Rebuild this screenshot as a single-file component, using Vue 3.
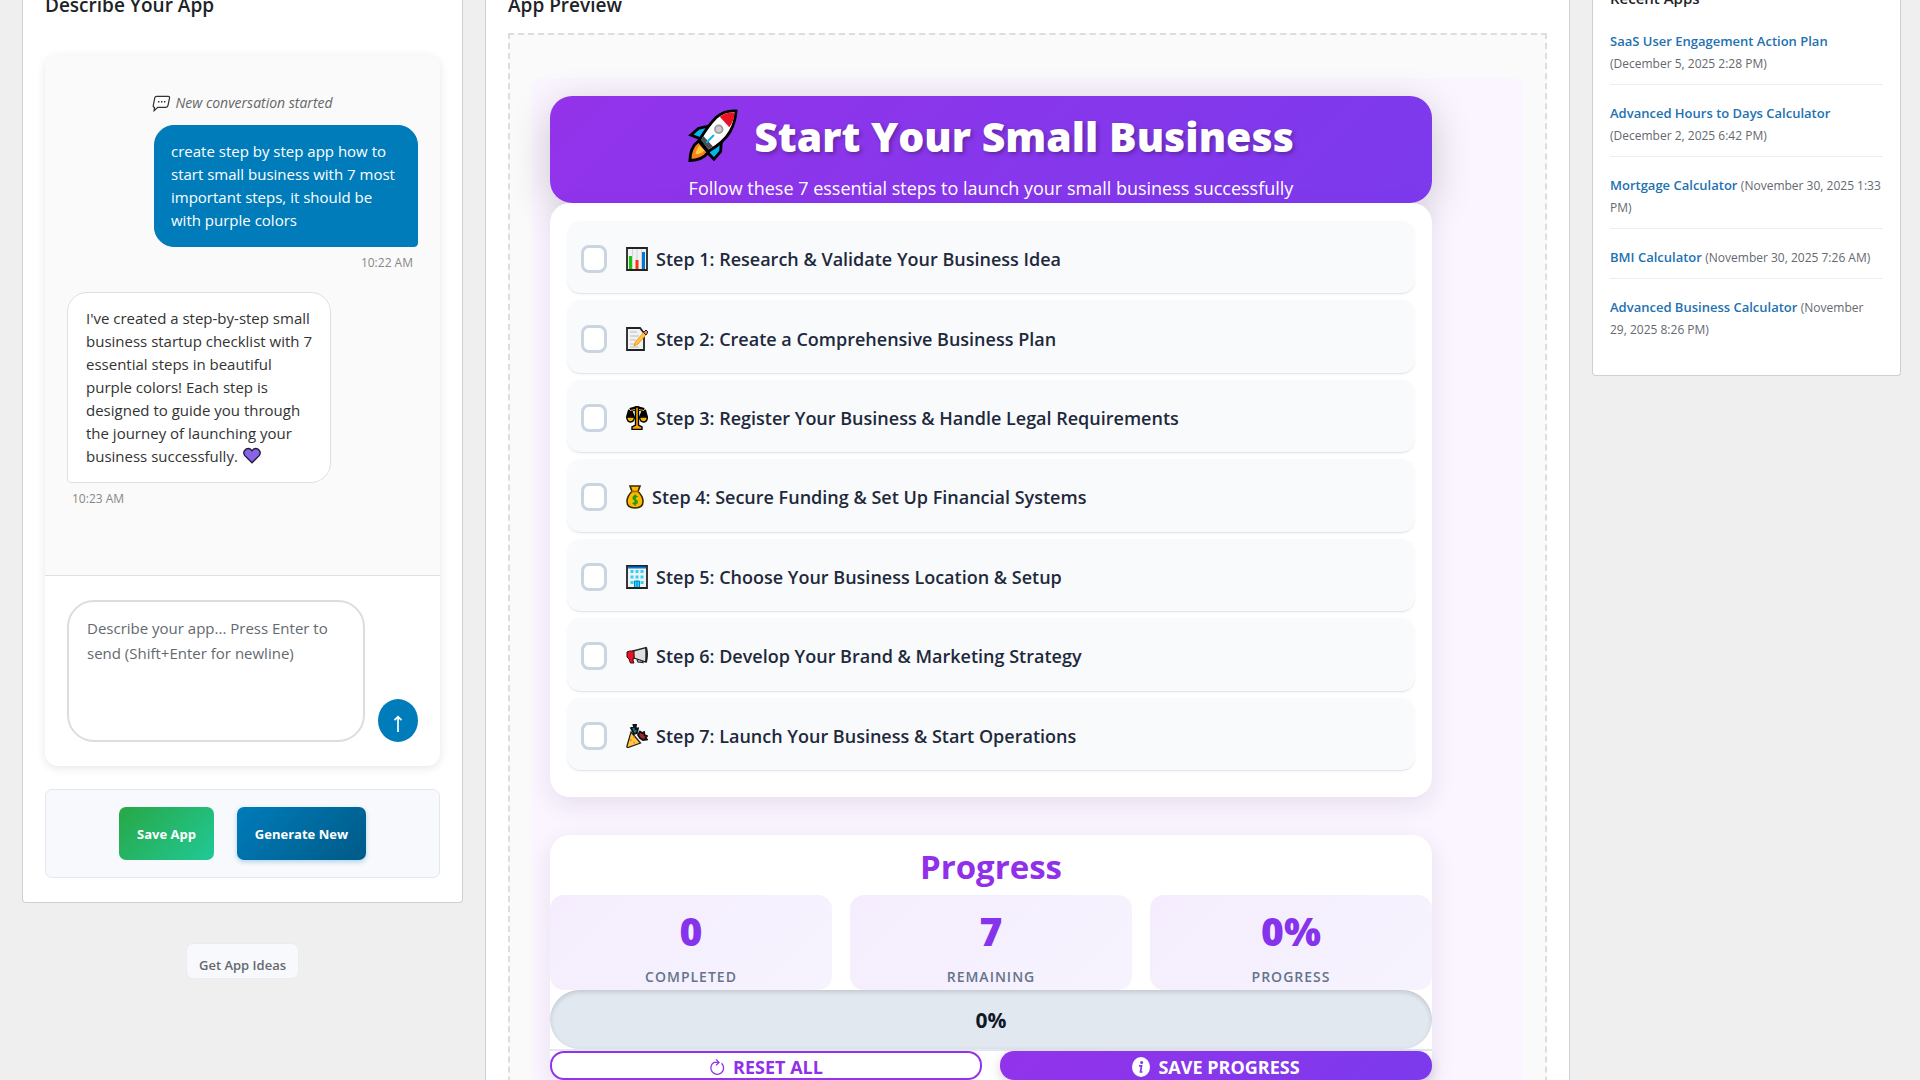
<template>
  <div class="page">
    <div class="column-left">
      <section class="panel builder">
        <h2>Describe Your App</h2>
        <div class="chat">
          <div class="messages">
            <p class="system-message">
              <svg class="bubble-icon" viewBox="0 0 20 18">
                <path
                  d="M5 1.5H17.2Q18.8 1.5 18.5 3L16.9 11Q16.5 13 14.6 13H6L2.2 16.6 2.6 13Q.9 13 1.3 11.2L2.8 3.4Q3.2 1.5 5 1.5Z"
                  fill="#fff"
                  stroke="#333"
                  stroke-width="1.3"
                />
                <path d="M6.2 7.2h1.6M9.4 7.2H11M12.6 7.2h1.6" stroke="#333" stroke-width="1.6" />
              </svg>
              New conversation started
            </p>
            <div v-for="m in messages" :key="m.time" class="message" :class="m.from">
              <div class="bubble">
                <span>{{ m.text }}</span>
                <svg v-if="m.from === 'bot'" class="heart-icon" viewBox="0 0 20 18">
                  <path
                    d="M10 17 2 9.2Q0 6.4 1.5 3.8 3.2 1 6 1.2 8.6 1.4 10 3.7 11.4 1.4 14 1.2 16.8 1 18.5 3.8 20 6.4 18 9.2Z"
                    fill="#8764e8"
                    stroke="#1d1a33"
                    stroke-width="1.5"
                  />
                </svg>
              </div>
              <time>{{ m.time }}</time>
            </div>
          </div>
          <form class="composer" @submit.prevent="sendMessage">
            <textarea
              v-model="draft"
              aria-label="Describe your app"
              placeholder="Describe your app... Press Enter to send (Shift+Enter for newline)"
              @keydown.enter.exact.prevent="sendMessage"
            ></textarea>
            <button type="submit" class="send" aria-label="Send">
              <svg viewBox="0 0 10 18">
                <path d="M5 17V2M1.5 5.2 5 1.8 8.5 5.2" fill="none" stroke="#fff" stroke-width="1.7" />
              </svg>
            </button>
          </form>
        </div>
        <div class="builder-actions">
          <button type="button" class="btn btn-save">Save App</button>
          <button type="button" class="btn btn-generate">Generate New</button>
        </div>
      </section>
      <button type="button" class="ideas">Get App Ideas</button>
    </div>

    <section class="panel preview">
      <h2>App Preview</h2>
      <div class="preview-frame">
        <div class="generated-app">
          <div class="app-body">
            <header class="hero">
              <h1>
                <svg class="rocket" viewBox="0 0 52 56">
                  <path d="M11 20 20 18 30 18 16 32 3 27Z" fill="#00b7f1" stroke="#000" stroke-width="3" />
                  <path d="M35 25 34 44 27 52 20 45 22 36Z" fill="#00b7f1" stroke="#000" stroke-width="3" />
                  <path d="M11 33Q2 40 2 53.5 15 53 21 45Z" fill="#f7801e" stroke="#000" stroke-width="3" />
                  <path d="M12 38Q8 43 8 47 13 47 17 43Z" fill="#ffc83d" />
                  <path
                    d="M50 2Q38 1 29 9 21 17 12 32L21 44Q38 34 44 23 49 14 50 2Z"
                    fill="#fff"
                    stroke="#000"
                    stroke-width="3"
                  />
                  <path d="M48.5 3.5Q39 3 33 8L43 19Q48 12 48.5 3.5Z" fill="#e81224" />
                  <path d="M13.5 32 21 42 26 39 16 28Z" fill="#484f55" />
                  <path d="M19 35 27 27" stroke="#00b7f1" stroke-width="2" />
                  <circle cx="32" cy="21" r="4" fill="#ccc" stroke="#999" stroke-width="1.8" />
                </svg>
                Start Your Small Business
              </h1>
              <p>Follow these 7 essential steps to launch your small business successfully</p>
            </header>

            <div class="steps">
              <label v-for="(step, i) in steps" :key="step.title" class="step">
                <input v-model="step.done" type="checkbox" />
                <svg v-if="i === 0" class="emoji" viewBox="0 0 22 24">
                  <path d="M1 1H21V23H1Z" fill="#f2f2f2" stroke="#222" stroke-width="1.8" />
                  <path d="M6.5 2V22M11 2V22M15.5 2V22" stroke="#d4d4d4" />
                  <path d="M4.5 9V22" stroke="#16c60c" stroke-width="3" />
                  <path d="M11 13V22" stroke="#f03a17" stroke-width="3" />
                  <path d="M17.5 5V22" stroke="#0078d7" stroke-width="3" />
                </svg>
                <svg v-else-if="i === 1" class="emoji" viewBox="0 0 22 24">
                  <path d="M1 1H14L18 6V23H1Z" fill="#f2f2f2" stroke="#222" stroke-width="1.8" />
                  <path d="M4 5h7M4 9h9M4 13h6M4 17h5M4 20h9" stroke="#bbb" stroke-width="1.2" />
                  <path d="M8 19 9.5 15 18 5 20.5 7 12 17Z" fill="#ffc83d" stroke="#f7941e" />
                  <path d="M17.5 5.5 20 3 22 5 20 8Z" fill="#ff7b6b" stroke="#222" />
                </svg>
                <svg v-else-if="i === 2" class="emoji" viewBox="0 0 22 24">
                  <path d="M4 4 11 2 18 4" fill="none" stroke="#000" stroke-width="4" />
                  <path d="M4 4 2 11M4 4 7 11M18 4 15 11M18 4 20 11" stroke="#000" stroke-width="4" />
                  <path
                    d="M.7 11H8.5Q8 16 4.5 16 1 16 .7 11ZM13.5 11H21.5Q21 16 17.5 16 14 16 13.5 11Z"
                    fill="#f7b500"
                    stroke="#000"
                    stroke-width="1.4"
                  />
                  <path
                    d="M9.5 1H12.5V19L16 21V23.4H6V21L9.5 19Z"
                    fill="#f7a500"
                    stroke="#000"
                    stroke-width="1.4"
                  />
                  <path d="M4 4.5 9 3.5M13 3.5 18 4.5" stroke="#f7b500" />
                </svg>
                <svg v-else-if="i === 3" class="emoji bag" viewBox="0 0 18 24">
                  <path
                    d="M4 1H14L12 6.5Q17 11 17 16.5 17 23 9 23 1 23 1 16.5 1 11 6 6.5Z"
                    fill="#ffb900"
                    stroke="#3b2a00"
                    stroke-width="1.6"
                  />
                  <path d="M5.5 6.5H12.5" stroke="#b36b00" stroke-width="1.8" />
                  <path
                    d="M11.5 12Q9 10.2 7.5 12 6.5 14 9 14.8 12 15.8 11 17.8 9.3 19.6 6.7 18M9.1 9.5V20.8"
                    fill="none"
                    stroke="#149b12"
                    stroke-width="1.5"
                  />
                </svg>
                <svg v-else-if="i === 4" class="emoji" viewBox="0 0 22 24">
                  <path d="M1 1H21V23H1Z" fill="#f2f2f2" stroke="#222" stroke-width="1.8" />
                  <path d="M2 2.5H20" stroke="#0078d7" stroke-width="2" />
                  <path
                    d="M4.5 6.5h3M9.5 6.5h3M14.5 6.5h3M4.5 12h3M9.5 12h3M14.5 12h3M4.5 17.5h3M14.5 17.5h3"
                    stroke="#31d2f7"
                    stroke-width="3"
                  />
                  <path d="M8.5 22V16H13.5V22M11 16V22" fill="#31d2f7" stroke="#0086cf" />
                </svg>
                <svg v-else-if="i === 5" class="emoji" viewBox="0 0 22 24">
                  <path d="M7 7 20 3.5V18L8 14Z" fill="#dedede" stroke="#222" stroke-width="1.3" />
                  <path d="M1 8Q3 6.5 8 7V15H6.5L8 19H4.5L3 15 1 13Z" fill="#e81224" stroke="#3c0508" />
                  <path d="M11 15.5 12 18 17 18.5V17" fill="none" stroke="#222" stroke-width="1.3" />
                  <path d="M20 3.5Q22 10 20 18" fill="none" stroke="#222" stroke-width="2" />
                </svg>
                <svg v-else class="emoji" viewBox="0 0 22 24">
                  <path d="M5 8 14.5 19 2 23.5Q.6 23.5 1 22Z" fill="#ffc83d" stroke="#222" stroke-width="1.3" />
                  <path d="M5 15 4.5 17M8.5 18 8 19.5M7.5 12.5 8.5 14" stroke="#f7801e" stroke-width="1.5" />
                  <path
                    d="M5 4 8 3 7.5 1 10 1 9.5 5 12 4.5 11 9 8 10Z"
                    fill="#107c8c"
                    stroke="#111"
                    stroke-width="1.8"
                  />
                  <path
                    d="M12 11 14 7.5 16 9 18 8 18.5 11 21 12 19.5 14 21 15.5 17 16 14 14Z"
                    fill="#a4262c"
                    stroke="#111"
                    stroke-width="1.8"
                  />
                </svg>
                <span>{{ step.title }}</span>
              </label>
            </div>

            <section class="progress-card">
              <h2>Progress</h2>
              <div class="stats">
                <div v-for="s in stats" :key="s.label" class="stat">
                  <strong>{{ s.value }}</strong>
                  <span>{{ s.label }}</span>
                </div>
              </div>
              <div class="progress-bar">
                <div class="progress-fill" :style="{ width: percent + '%' }"></div>
                <span>{{ percent }}%</span>
              </div>
              <div class="progress-actions">
                <button type="button" class="action reset" @click="resetAll">
                  <svg viewBox="0 0 16 18">
                    <path
                      d="M12.5 5.2A6.4 6.4 0 1 1 5 4.4H9.5M7 1.4 10 4.4 7 7.4"
                      fill="none"
                      stroke="currentColor"
                      stroke-width="1.3"
                    />
                  </svg>
                  RESET ALL
                </button>
                <button type="button" class="action save">
                  <svg class="info" viewBox="0 0 18 20">
                    <ellipse cx="9" cy="10" rx="9" ry="10" fill="#fff" />
                    <circle cx="9.6" cy="5.5" r="1.5" fill="#8236eb" />
                    <path d="M7 8.8H9.5L8.5 15H10.5" fill="none" stroke="#8236eb" stroke-width="1.7" />
                  </svg>
                  SAVE PROGRESS
                </button>
              </div>
            </section>
          </div>
        </div>
      </div>
    </section>

    <aside class="panel recent">
      <h3>Recent Apps</h3>
      <ul>
        <li v-for="app in recentApps" :key="app.name">
          <a href="#">{{ app.name }}</a>{{ " " }}<small>({{ app.date }})</small>
        </li>
      </ul>
    </aside>
  </div>
</template>

<script setup>
import { ref, computed } from "vue";

const draft = ref("");

const messages = ref([
  {
    from: "user",
    text: "create step by step app how to\nstart small business with 7 most\nimportant steps, it should be\nwith purple colors",
    time: "10:22 AM",
  },
  {
    from: "bot",
    text: "I've created a step-by-step small\nbusiness startup checklist with 7\nessential steps in beautiful\npurple colors! Each step is\ndesigned to guide you through\nthe journey of launching your\nbusiness successfully.",
    time: "10:23 AM",
  },
]);

const steps = ref([
  { title: "Step 1: Research & Validate Your Business Idea", done: false },
  { title: "Step 2: Create a Comprehensive Business Plan", done: false },
  { title: "Step 3: Register Your Business & Handle Legal Requirements", done: false },
  { title: "Step 4: Secure Funding & Set Up Financial Systems", done: false },
  { title: "Step 5: Choose Your Business Location & Setup", done: false },
  { title: "Step 6: Develop Your Brand & Marketing Strategy", done: false },
  { title: "Step 7: Launch Your Business & Start Operations", done: false },
]);

const recentApps = [
  { name: "SaaS User Engagement Action Plan", date: "December 5, 2025 2:28 PM" },
  { name: "Advanced Hours to Days Calculator", date: "December 2, 2025 6:42 PM" },
  { name: "Mortgage Calculator", date: "November 30, 2025 1:33 PM" },
  { name: "BMI Calculator", date: "November 30, 2025 7:26 AM" },
  { name: "Advanced Business Calculator", date: "November 29, 2025 8:26 PM" },
];

const completed = computed(() => steps.value.filter((s) => s.done).length);
const percent = computed(() => Math.round((completed.value / steps.value.length) * 100));
const stats = computed(() => [
  { label: "COMPLETED", value: completed.value },
  { label: "REMAINING", value: steps.value.length - completed.value },
  { label: "PROGRESS", value: percent.value + "%" },
]);

const sendMessage = () => {
  if (!draft.value.trim()) return;
  const time = new Date().toLocaleTimeString("en-US", { hour: "2-digit", minute: "2-digit" });
  messages.value.push({ from: "user", text: draft.value, time });
  draft.value = "";
};

const resetAll = () => {
  steps.value.forEach((s) => (s.done = false));
};
</script>

<style>
body {
  margin: 0;
  background: #efefef;
}
</style>

<style scoped>
* {
  box-sizing: border-box;
}

.page {
  display: flex;
  gap: 22px;
  height: 100vh;
  padding: 0 19px 0 22px;
  overflow: hidden;
  font-family: "Segoe UI", "Open Sans", "Noto Sans", sans-serif;
  color: #1d2327;
}

h1,
h2,
h3,
p,
ul {
  margin: 0;
  padding: 0;
}

button {
  font-family: inherit;
  cursor: pointer;
}

.panel {
  background: #fff;
  border: 1px solid #ccd0d4;
  border-top: none;
  padding: 0 22px;
}

.builder h2,
.preview > h2 {
  font-size: 19px;
  font-weight: 600;
  line-height: 11px;
}

.column-left {
  flex: 0 0 441px;
  display: flex;
  flex-direction: column;
  align-items: center;
}

.builder {
  width: 100%;
  padding-bottom: 24px;
  border-radius: 0 0 4px 4px;
}

.chat {
  margin-top: 44px;
  border-radius: 13px;
  box-shadow: 0 2px 10px rgba(0, 0, 0, 0.1);
  overflow: hidden;
}

.messages {
  min-height: 521px;
  padding: 37px 22px 22px;
  background: #fafafa;
  border-bottom: 1px solid #e0e0e0;
}

.system-message {
  display: flex;
  align-items: center;
  justify-content: center;
  gap: 4px;
  margin-bottom: 11px;
  font-size: 14px;
  font-style: italic;
  line-height: 22px;
  color: #666;
}

.bubble-icon {
  width: 19px;
  height: 17px;
}

.message {
  display: flex;
  flex-direction: column;
  align-items: flex-start;
  margin-bottom: 18px;
}

.message.user {
  align-items: flex-end;
}

.bubble {
  width: 264px;
  padding: 14px 18px;
  border: 1px solid #e0e0e0;
  border-radius: 20px 20px 20px 4px;
  background: #fff;
  color: #333;
  font-size: 15px;
  line-height: 23px;
  white-space: pre;
}

.user .bubble {
  padding: 14px 16px;
  border-color: #007cba;
  border-radius: 20px 20px 4px 20px;
  background: #007cba;
  color: #fff;
}

.heart-icon {
  width: 18px;
  height: 17px;
  margin-left: 5px;
  vertical-align: -2px;
}

time {
  padding: 5px 5px 0;
  font-size: 12px;
  line-height: 22px;
  color: #888;
}

.composer {
  display: flex;
  align-items: flex-end;
  gap: 13px;
  padding: 24px 22px;
}

textarea {
  flex: 1;
  min-width: 0;
  height: 142px;
  padding: 14px 18px;
  border: 2px solid #ddd;
  border-radius: 27px;
  background: #fff;
  font-family: inherit;
  font-size: 15px;
  line-height: 25px;
  resize: none;
}

textarea::placeholder {
  color: #646970;
}

.send {
  display: flex;
  align-items: center;
  justify-content: center;
  width: 40px;
  height: 43px;
  padding: 6px 0 0;
  border: none;
  border-radius: 50%;
  background: #007cba;
}

.send svg {
  width: 10px;
  height: 18px;
}

.builder-actions {
  display: flex;
  justify-content: center;
  gap: 23px;
  margin-top: 23px;
  padding: 17px;
  background: #f8f9fc;
  border: 1px solid #e2e8f0;
  border-radius: 7px;
}

.btn {
  height: 53px;
  padding: 0 18px;
  border: none;
  border-radius: 7px;
  color: #fff;
  font-size: 13px;
  font-weight: 700;
  white-space: nowrap;
}

.btn-save {
  background: linear-gradient(135deg, #28a745, #20c997);
}

.btn-generate {
  background: linear-gradient(135deg, #007cba, #005a87);
  box-shadow: 0 2px 5px rgba(0, 124, 186, 0.3);
}

.ideas {
  margin-top: 40px;
  height: 36px;
  padding: 8px 12px 0;
  border: 1px solid #e9ecf1;
  border-radius: 7px;
  background: #f8f9fc;
  color: #646970;
  font-size: 13px;
  font-weight: 600;
}

.preview {
  flex: 1;
  min-width: 0;
  border-bottom: none;
}

.preview-frame {
  height: 1200px;
  margin-top: 22px;
  padding: 43px 22px;
  background: #fafafa;
  border: 2px dashed #ddd;
}

.generated-app {
  height: 100%;
  padding: 18px;
  background: #faf5ff;
  border-radius: 10px;
}

.app-body {
  max-width: 882px;
}

.hero {
  height: 107px;
  border-radius: 22px;
  background: linear-gradient(135deg, #9333ea, #7c3aed);
  box-shadow: 0 10px 40px rgba(0, 0, 0, 0.2);
  color: #fff;
  text-align: center;
}

.hero h1 {
  display: flex;
  align-items: center;
  justify-content: center;
  gap: 16px;
  font-size: 41px;
  font-weight: 800;
  line-height: 80px;
  text-shadow: 2px 2px 4px rgba(0, 0, 0, 0.3);
}

.rocket {
  width: 50px;
  height: 54px;
}

.hero p {
  font-size: 18px;
  line-height: 24px;
}

.steps {
  position: relative;
  display: grid;
  grid-auto-rows: 1fr;
  gap: 6px;
  min-height: 594px;
  padding: 18px 17px 26px;
  border-radius: 20px;
  background: #fff;
  box-shadow: 0 8px 25px rgba(76, 29, 99, 0.1);
}

.step {
  display: flex;
  align-items: center;
  padding: 4px 14px 0;
  border-bottom: 1px solid #dfe6ee;
  border-radius: 14px;
  background: #f9fafc;
  box-shadow: 0 1px 3px rgba(0, 0, 0, 0.04);
  color: #1e293b;
  font-size: 18px;
  font-weight: 600;
}

.step input {
  appearance: none;
  width: 26px;
  height: 28px;
  margin: 0 19px 0 0;
  border: 3px solid #cbd5e1;
  border-radius: 8px;
  background: #fff;
}

.step input:checked {
  border-color: #9333ea;
  background: #9333ea;
}

.emoji {
  width: 22px;
  height: 24px;
  margin-right: 8px;
}

.emoji.bag {
  width: 18px;
}

.progress-card {
  margin-top: 38px;
  border-radius: 20px;
  background: #fff;
  box-shadow: 0 8px 25px rgba(76, 29, 99, 0.1);
}

.progress-card h2 {
  height: 60px;
  color: #9130ea;
  font-size: 33px;
  font-weight: 700;
  line-height: 64px;
  text-align: center;
}

.stats {
  display: grid;
  grid-template-columns: repeat(3, 1fr);
  gap: 18px;
}

.stat {
  display: flex;
  flex-direction: column;
  align-items: center;
  height: 95px;
  border-radius: 14px;
  background: linear-gradient(135deg, #f5edfd, #f6f3fe);
}

.stat strong {
  color: #8634eb;
  font-size: 39px;
  font-weight: 800;
  line-height: 72px;
}

.stat span {
  color: #64748b;
  font-size: 14px;
  font-weight: 600;
  line-height: 20px;
  letter-spacing: 1px;
}

.progress-bar {
  position: relative;
  height: 59px;
  border-radius: 30px;
  background: #e2e8f0;
  box-shadow: inset 0 2px 5px rgba(0, 0, 0, 0.15);
  font-size: 21px;
  font-weight: 700;
  line-height: 61px;
  text-align: center;
  color: #111827;
  overflow: hidden;
}

.progress-fill {
  position: absolute;
  inset: 0 auto 0 0;
  background: linear-gradient(135deg, #9333ea, #7c3aed);
}

.progress-bar span {
  position: relative;
}

.progress-actions {
  display: grid;
  grid-template-columns: 1fr 1fr;
  gap: 18px;
  border-top: 2px solid #e2e8f0;
}

.action {
  display: flex;
  align-items: center;
  justify-content: center;
  gap: 8px;
  height: 29px;
  padding: 2px 0 0;
  border: 2px solid #9333ea;
  border-radius: 14px;
  font-size: 18px;
  font-weight: 700;
}

.action svg {
  width: 16px;
  height: 18px;
}

.action .info {
  width: 18px;
  height: 20px;
}

.reset {
  background: #fff;
  color: #9130ea;
}

.save {
  border: none;
  background: linear-gradient(135deg, #9333ea, #7c3aed);
  box-shadow: 0 4px 12px rgba(76, 29, 99, 0.2);
  color: #fff;
}

.recent {
  flex: 0 0 309px;
  align-self: flex-start;
  padding: 0 17px 35px;
  border-radius: 0 0 4px 4px;
}

.recent h3 {
  margin-top: -8px;
  font-size: 15px;
  font-weight: 600;
  line-height: 13px;
}

.recent ul {
  margin-top: 8px;
  list-style: none;
}

.recent li {
  padding: 17px 0 10px;
  border-bottom: 1px solid #eee;
  font-size: 13px;
  line-height: 22px;
}

.recent li:last-child {
  padding-bottom: 0;
  border-bottom: none;
}

.recent a {
  color: #2271b1;
  font-weight: 600;
  text-decoration: none;
}

.recent small {
  color: #646970;
  font-size: 12px;
  line-height: 12px;
}
</style>
